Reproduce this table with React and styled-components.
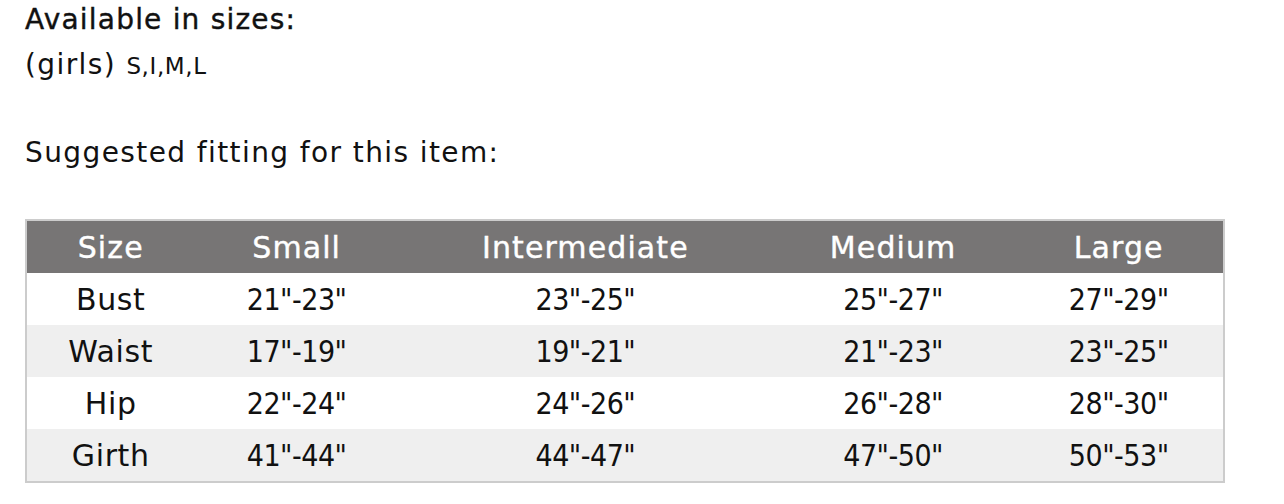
import React from "react";
import styled, { createGlobalStyle } from "styled-components";

const Global = createGlobalStyle`
  html, body { margin: 0; padding: 0; background: #fff; }
  body {
    font-family: "DejaVu Sans", Inter, sans-serif;
    color: #111;
  }
`;

const Page = styled.div`
  padding: 0 0 0 25px;
  width: 1200px;
`;

const Block = styled.p`
  margin: ${(p) => p.$mt}px 0 0 0;
  font-size: 28px;
  line-height: 45px;
  letter-spacing: 1.4px;
`;

const Lead = styled.span`
  -webkit-text-stroke: 0.4px #111;
  letter-spacing: 1.2px;
`;

const SizeList = styled.span`
  font-size: 23px;
  line-height: 1;
  letter-spacing: 0.6px;
`;

const Table = styled.table`
  width: 1200px;
  border-collapse: collapse;
  border: 2px solid #cccccc;
  table-layout: fixed;
  margin-top: 44px;
`;

const Th = styled.th`
  background: #777575;
  color: #fff;
  font-weight: 400;
  -webkit-text-stroke: 0.4px #fff;
  font-size: 30px;
  letter-spacing: 1.1px;
  height: 52px;
  padding: 0;
  text-align: center;
`;

const Tr = styled.tr`
  background: ${(p) => (p.$alt ? "#efefef" : "#fff")};
`;

const Td = styled.td`
  font-size: 30px;
  font-stretch: ${(p) => (p.$label ? "normal" : "condensed")};
  letter-spacing: ${(p) => (p.$label ? "0.6px" : "-0.5px")};
  height: 52px;
  padding: 0;
  text-align: center;
  color: #111;
`;

const widths = [168, 204, 372, 242, 209];
const headers = ["Size", "Small", "Intermediate", "Medium", "Large"];
const rows = [
  ["Bust", '21"-23"', '23"-25"', '25"-27"', '27"-29"'],
  ["Waist", '17"-19"', '19"-21"', '21"-23"', '23"-25"'],
  ["Hip", '22"-24"', '24"-26"', '26"-28"', '28"-30"'],
  ["Girth", '41"-44"', '44"-47"', '47"-50"', '50"-53"'],
];

export default function App() {
  return (
    <>
      <Global />
      <Page>
        <Block $mt={-3}>
          <Lead>Available in sizes:</Lead>
          <br />
          (girls) <SizeList>S,I,M,L</SizeList>
        </Block>
        <Block $mt={43}>Suggested fitting for this item:</Block>
        <Table>
          <colgroup>
            {widths.map((w, i) => (
              <col key={i} style={{ width: w }} />
            ))}
          </colgroup>
          <thead>
            <tr>
              {headers.map((h) => (
                <Th key={h}>{h}</Th>
              ))}
            </tr>
          </thead>
          <tbody>
            {rows.map((r, i) => (
              <Tr key={r[0]} $alt={i % 2 === 1}>
                {r.map((c, j) => (
                  <Td key={j} $label={j === 0}>
                    {c}
                  </Td>
                ))}
              </Tr>
            ))}
          </tbody>
        </Table>
      </Page>
    </>
  );
}
